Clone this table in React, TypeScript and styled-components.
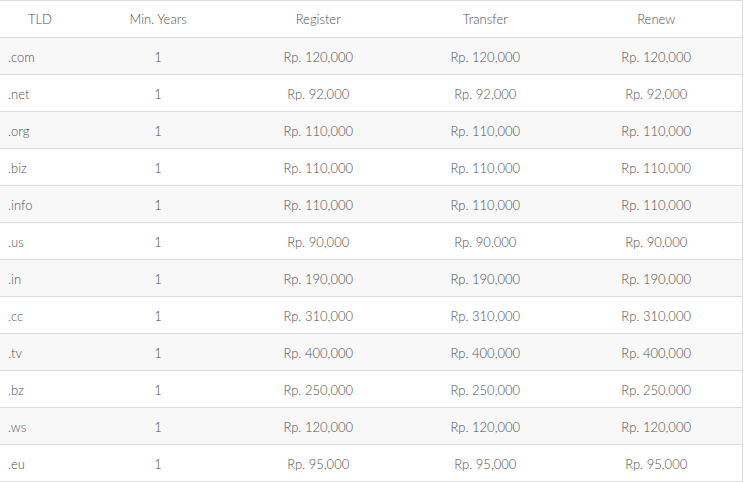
import styled, { createGlobalStyle } from "styled-components";

const GlobalStyle = createGlobalStyle`
  html, body {
    margin: 0;
    padding: 0;
    background: #fff;
  }
  body {
    font-family: Lato, "Liberation Sans", sans-serif;
  }
`;

type Price = {
  tld: string;
  years: number;
  register: string;
  transfer: string;
  renew: string;
};

const prices: Price[] = [
  { tld: ".com", years: 1, register: "120,000", transfer: "120,000", renew: "120,000" },
  { tld: ".net", years: 1, register: "92,000", transfer: "92,000", renew: "92,000" },
  { tld: ".org", years: 1, register: "110,000", transfer: "110,000", renew: "110,000" },
  { tld: ".biz", years: 1, register: "110,000", transfer: "110,000", renew: "110,000" },
  { tld: ".info", years: 1, register: "110,000", transfer: "110,000", renew: "110,000" },
  { tld: ".us", years: 1, register: "90,000", transfer: "90,000", renew: "90,000" },
  { tld: ".in", years: 1, register: "190,000", transfer: "190,000", renew: "190,000" },
  { tld: ".cc", years: 1, register: "310,000", transfer: "310,000", renew: "310,000" },
  { tld: ".tv", years: 1, register: "400,000", transfer: "400,000", renew: "400,000" },
  { tld: ".bz", years: 1, register: "250,000", transfer: "250,000", renew: "250,000" },
  { tld: ".ws", years: 1, register: "120,000", transfer: "120,000", renew: "120,000" },
  { tld: ".eu", years: 1, register: "95,000", transfer: "95,000", renew: "95,000" },
];

const columns = [80, 156, 164, 170, 172];

const PriceTable = styled.table`
  width: 743px;
  border-collapse: collapse;
  table-layout: fixed;
  border-top: 1px solid #dddddd;
  border-right: 1px solid #dddddd;
  border-bottom: 1px solid #dddddd;
  font-size: 13px;
  font-weight: 300;
  color: #4f4f4f;
`;

const HeadRow = styled.tr`
  height: 37px;
`;

const HeadCell = styled.th`
  padding: 0 8px;
  font-weight: 300;
  text-align: center;
  color: #4f4f4f;
`;

const Row = styled.tr<{ $striped: boolean }>`
  height: 37px;
  border-top: 1px solid #dddddd;
  background: ${({ $striped }) => ($striped ? "#f8f8f8" : "#ffffff")};
`;

const Cell = styled.td<{ $align?: "left" | "center" }>`
  padding: 2px 8px 0;
  text-align: ${({ $align }) => $align ?? "center"};
  white-space: nowrap;
`;

export default function App() {
  return (
    <>
      <GlobalStyle />
      <PriceTable>
        <colgroup>
          {columns.map((w, i) => (
            <col key={i} style={{ width: w }} />
          ))}
        </colgroup>
        <thead>
          <HeadRow>
            <HeadCell>TLD</HeadCell>
            <HeadCell>Min. Years</HeadCell>
            <HeadCell>Register</HeadCell>
            <HeadCell>Transfer</HeadCell>
            <HeadCell>Renew</HeadCell>
          </HeadRow>
        </thead>
        <tbody>
          {prices.map((p, i) => (
            <Row key={p.tld} $striped={i % 2 === 0}>
              <Cell $align="left">{p.tld}</Cell>
              <Cell>{p.years}</Cell>
              <Cell>Rp. {p.register}</Cell>
              <Cell>Rp. {p.transfer}</Cell>
              <Cell>Rp. {p.renew}</Cell>
            </Row>
          ))}
        </tbody>
      </PriceTable>
    </>
  );
}
